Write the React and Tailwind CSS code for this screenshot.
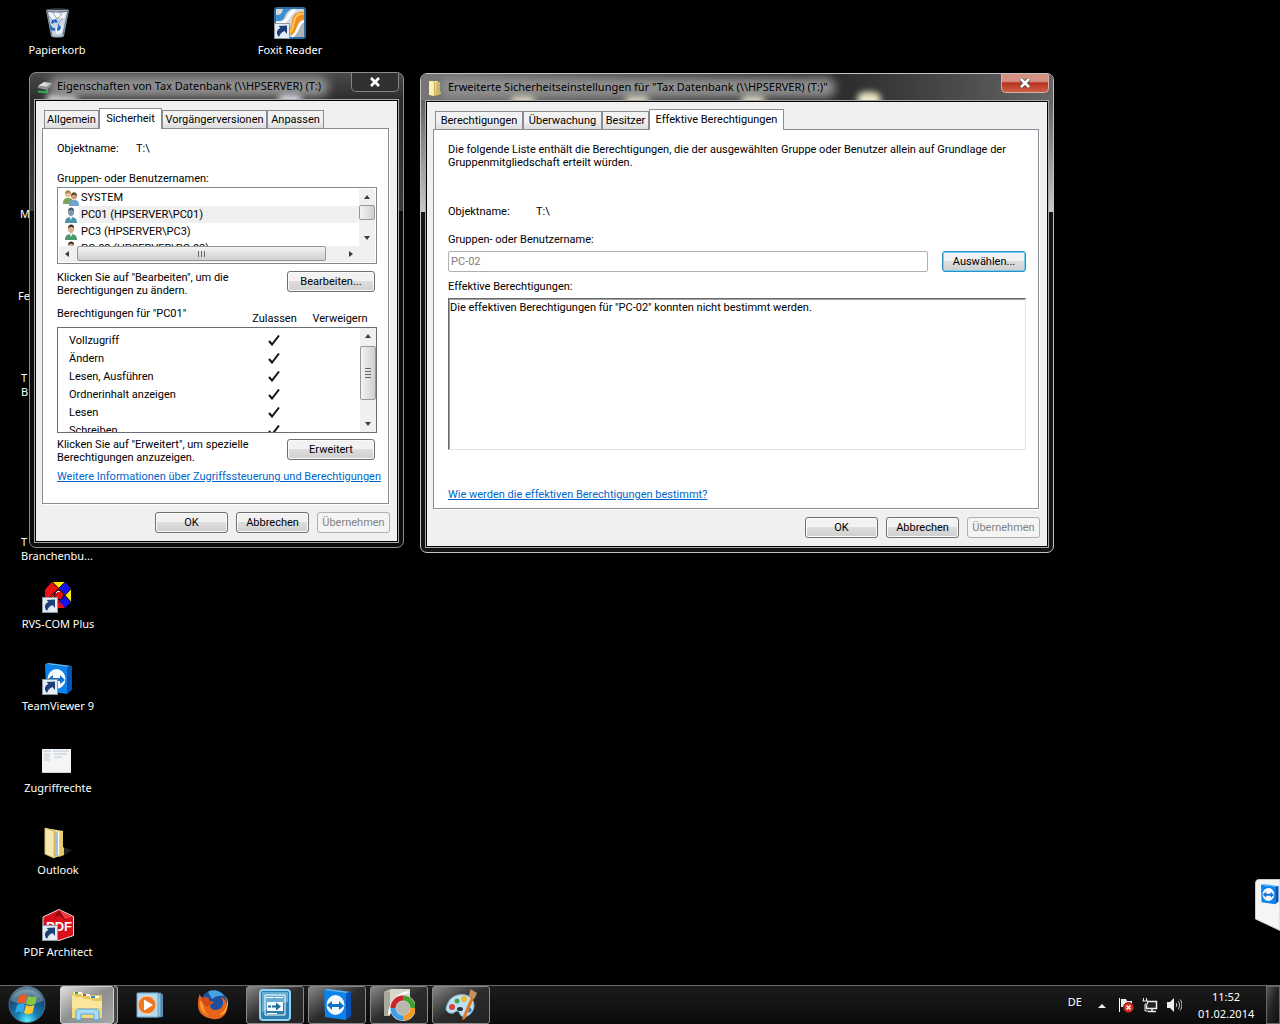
import { useState } from 'react';
import clsx from 'clsx';

/* ---------- Icons ---------- */

const ShortcutBadge = () => (
  <g>
    <rect x="0.5" y="16.5" width="15" height="15" fill="#e4ebf1" stroke="#8d98a3" />
    <path d="M5 30c-3-3-3-7 1.500-9L4.500 19 13 18.500V27l-2.500-3C7.500 25 6 27 5 30z" fill="#1c3f78" />
  </g>
);

const RecycleBinIcon = () => (
  <svg viewBox="0 0 32 32" className="w-8 h-8" aria-hidden="true">
    <path d="M5 3l5 26c1 2 12 2 13 0l5-26z" fill="#9fafc1" />
    <path d="M7 5l4 23c2 1 9 1 10 0l5-23z" fill="#cbd6e2" />
    <path d="M8 4l4 3 3-3 4 4 6-4-2 8-6-2-4 4-4-3z" fill="#f4f8fc" />
    <path d="M12 6l4 6 5-5M8 9l4 5M22 11l-5 6 3 8" stroke="#93a3b6" fill="none" />
    <path d="M15 20l5 2 2-5-1 9-6 1z" fill="#eef3f9" />
    <ellipse cx="16.500" cy="3.500" rx="11.500" ry="1.500" fill="none" stroke="#5c6773" />
    <path d="M6 4l5 24M27 4l-5 24" stroke="#66758a" fill="none" />
    <path d="M11 13l4-1 2 3-2 1-2-1-1 2-2-1zM17 17l3 3-1 3-3 1v-3l1-1zM9 17l3 4 2 0v3l-4-1z" fill="#2468c9" />
  </svg>
);

const FoxitIcon = () => (
  <svg viewBox="0 0 32 32" className="w-8 h-8" aria-hidden="true">
    <rect x="1" y="1" width="30" height="30" rx="2" fill="#d3d8de" stroke="#2a6a9c" strokeWidth="2" />
    <path d="M2 14c8 1 8-3 10-7 2-3 4-4 5-5H9C8 6 7 8 2 8z" fill="#3c8fd0" />
    <path d="M2 16c9 1 11-3 13-7 2-4 4-5 6-6" stroke="#fff" strokeWidth="3" fill="none" />
    <path d="M30 5c-7-1-11 3-12 9-1 7-2 8-5 11l5 3c4-4 4-7 6-11 1-3 3-4 6-4z" fill="#f28c17" />
    <path d="M30 7c-6-1-9 3-10 8-1 6-2 8-4 11" stroke="#ffc75a" strokeWidth="2" fill="none" />
    <path d="M19 30c5-4 6-14 11-15v15z" fill="#aeb3ba" />
    <path d="M18 30c7-5 6-14 12-16" stroke="#fff" strokeWidth="2" fill="none" />
    <ShortcutBadge />
  </svg>
);

const RvsIcon = () => (
  <svg viewBox="0 0 32 32" className="w-8 h-8" aria-hidden="true">
    <path d="M10 1h13l6 7v13l-7 6H10l-7-8V9z" fill="#e11" />
    <path d="M11 1h12l-6 6z" fill="#fe0" />
    <path d="M23 1l6 7-6 6-6-7z" fill="#11e" />
    <path d="M10 1l7 6-8 8-6-6z" fill="#e11" />
    <path d="M29 8v13l-6-7z" fill="#fe0" />
    <path d="M23 14l6 7-6 6-6-7z" fill="#11e" />
    <path d="M17 20l5 7H11z" fill="#e11" />
    <path d="M10 1l19 20M23 1L4 20M29 8L12 26" stroke="#111" fill="none" />
    <circle cx="17" cy="14" r="4.500" fill="#d11" stroke="#111" />
    <path d="M14 12c1-2 3-2 4-1" stroke="#fff" fill="none" />
    <ShortcutBadge />
  </svg>
);

const TeamViewerShape = () => (
  <g>
    <path d="M3 1l22 3v27L4 28z" fill="#0b83ea" />
    <path d="M3 1l4-1 23 3-5 1z" fill="#58baff" />
    <path d="M25 4l5-1v24l-5 4z" fill="#0552b4" />
    <ellipse cx="14.500" cy="16" rx="9" ry="10" fill="#f4f9fd" />
    <path d="M6 16l5-4v3h7v-3l5 5-5 4v-3h-7v3z" fill="#1170c8" />
  </g>
);

const TeamViewerIcon = ({ shortcut }) => (
  <svg viewBox="0 0 32 32" className="w-8 h-8" aria-hidden="true">
    <TeamViewerShape />
    {shortcut && <ShortcutBadge />}
  </svg>
);

const ThumbnailIcon = () => (
  <svg viewBox="0 0 32 32" className="w-8 h-8" aria-hidden="true">
    <rect x="0" y="4" width="29" height="24" fill="#f3f5f6" />
    <path d="M1 6h8M11 6h16M12 9h13M12 12h8" stroke="#b9c6d2" />
    <path d="M2 9h6M2 11h6M2 13h5M2 15h6" stroke="#c8ccd0" />
    <path d="M0 27.500h29" stroke="#cfd3d6" />
  </svg>
);

const FolderIcon = () => (
  <svg viewBox="0 0 32 32" className="w-8 h-8" aria-hidden="true">
    <path d="M21 20l9 3-9 6z" fill="#222" />
    <path d="M3 1l18 3v24l-9 3z" fill="#efdc92" />
    <path d="M12 4l3 1v24l-3 1z" fill="#d9b95a" />
    <path d="M14 6l3 0v22l-3 1z" fill="#9cbfe0" />
    <path d="M16.500 6v22" stroke="#fff" />
    <path d="M18 5l3 1v14l1 1v7l-5 2z" fill="#e5c868" />
    <path d="M3 1l9 3v27l-9-4z" fill="#f6e8ae" stroke="#d5bc66" />
  </svg>
);

const PdfIcon = () => (
  <svg viewBox="0 0 32 32" className="w-8 h-8" aria-hidden="true">
    <path d="M17 0.500l14.500 7v19l-14.500 5L1 26V8z" fill="#d9101a" stroke="#f4dede" />
    <path d="M17 1l-6 9 6-4 8 6-3-8z" fill="#8e0610" />
    <path d="M17 1l13 7-7 2z" fill="#f23a3f" />
    <text x="17" y="22" textAnchor="middle" fill="#fff" className="font-['Liberation_Sans'] font-bold text-[13px]">PDF</text>
    <ShortcutBadge />
  </svg>
);

const StartOrb = () => (
  <svg viewBox="0 0 38 38" className="w-[38px] h-[38px]" aria-hidden="true">
    <defs>
      <radialGradient id="orb" cx="50%" cy="95%" r="85%">
        <stop offset="0" stopColor="#5ff0ff" />
        <stop offset="0.350" stopColor="#1581b8" />
        <stop offset="0.800" stopColor="#174a72" />
        <stop offset="1" stopColor="#5d7f95" />
      </radialGradient>
    </defs>
    <circle cx="19" cy="18.500" r="18" fill="url(#orb)" stroke="#4c6c80" />
    <path d="M3 15c4-15 28-15 32 0-10 4-22 4-32 0z" fill="#fff" opacity="0.250" />
    <path d="M11 10c3-2 5-2 8-0.500l-2 8c-3-1.500-5-1-8 0.500z" fill="#ee5a24" />
    <path d="M20 10c3 1.500 5 1.500 9 0l-2 8c-3 1.500-6 1.500-9 0z" fill="#8cc63e" />
    <path d="M9 19c3-1.500 5-2 8-0.500l-2 8c-3-1.500-5-1-8 0.500z" fill="#35a8e8" />
    <path d="M18 19c3 1.500 5 1.500 8.500 0l-2 8c-3 1.500-5.500 1.500-8.500 0z" fill="#fdc82f" />
  </svg>
);

const ExplorerIcon = () => (
  <svg viewBox="0 0 32 32" className="w-8 h-8" aria-hidden="true">
    <path d="M1 3h10l2 3h18v23H1z" fill="#e8c75c" />
    <path d="M3 3h8v2H3z" fill="#fff" /><path d="M4 3h3v2H4z" fill="#3a3" />
    <path d="M11 5h8v2h-8z" fill="#fff" /><path d="M12 5h3v2h-3z" fill="#d43" />
    <path d="M19 7h9v2h-9z" fill="#fff" /><path d="M20 7h4v2h-4z" fill="#38c" />
    <path d="M1 6h2l1 2h7l2 2h7l2 2h9v17H1z" fill="#f9e69a" />
    <path d="M1 19h30v10H1z" fill="#f2d87e" />
    <path d="M5 31v-8c0-2 1-3 3-3h17c2 0 3 1 3 3v8h-5v-6H10v6z" fill="#a6dcf5" stroke="#5aa3d0" />
  </svg>
);

const MediaPlayerIcon = () => (
  <svg viewBox="0 0 32 32" className="w-8 h-8" aria-hidden="true">
    <path d="M9 5h20v23H9z" fill="#5b91b8" />
    <path d="M6 4h21v24H6z" fill="#8fc0de" stroke="#48799d" />
    <path d="M3 4h21v24H3z" fill="#b7dbee" stroke="#6fa3c4" />
    <circle cx="13" cy="16" r="9" fill="#ef7623" stroke="#fbd2ae" />
    <path d="M10 10.500v11l9-5.500z" fill="#fff" />
  </svg>
);

const FirefoxIcon = () => (
  <svg viewBox="0 0 32 32" className="w-8 h-8" aria-hidden="true">
    <circle cx="17" cy="14" r="13" fill="#1d4f9e" />
    <path d="M11 3c5-3 13-1 16 4-5-1-9 0-12 3z" fill="#49a3e0" />
    <path d="M3 5c0 2 1 3 3 4 2-1 4-1 6 0-1 1-1 2 1 3l4 1c-1 2-4 2-4 4 1 5 8 5 12 1 2-3 1-7-1-10 6 3 7 9 6 13-2 7-8 10-14 9C7 29 1 24 1 16c0-4 0-8 2-11z" fill="#e8641b" />
    <path d="M28 7c4 7 2 15-6 19 4 0 7-3 8-7 2-4 1-9-2-12z" fill="#fbc02d" />
    <path d="M3 12c-1 7 3 13 9 15-5-4-6-9-5-14z" fill="#f99a2c" />
    <path d="M4 8c2 2 6 0 8 2-1 2 1 3 4 3-2 3-5 2-5 5-4-1-7-4-7-10z" fill="#d5471a" />
  </svg>
);

const RemoteIcon = () => (
  <svg viewBox="0 0 32 32" className="w-8 h-8" aria-hidden="true">
    <rect x="1" y="1" width="30" height="30" rx="3" fill="#2f7fae" stroke="#8fd3f2" strokeWidth="2" />
    <path d="M3 3h26v10C20 14 10 18 3 24z" fill="#8ccbe8" opacity="0.600" />
    <path d="M6 6h20v20H6z" fill="none" stroke="#fff" />
    <path d="M7 8.500h18" stroke="#fff" strokeDasharray="8 1" />
    <path d="M8 13h16v9H8z" fill="#f4fafd" />
    <path d="M9 17.500h3M13 17.500h5" stroke="#1f6a96" strokeWidth="2" />
    <path d="M17 13.500l5 4-5 4z" fill="#1f6a96" />
    <path d="M8 24.500h10" stroke="#fff" />
  </svg>
);

const BackupIcon = () => (
  <svg viewBox="0 0 32 32" className="w-8 h-8" aria-hidden="true">
    <path d="M1 3l7-3h19v17L1 27z" fill="#d8d5cb" />
    <path d="M1 3l6-1v25H1z" fill="#aaa79c" />
    <path d="M6 26C7 12 14 5 26 3" stroke="#fff" strokeWidth="2" fill="none" />
    <circle cx="20" cy="19" r="10" fill="#b9b6ad" stroke="#ddd" strokeWidth="6" />
    <path d="M10 19a10 10 0 0 1 10-10" stroke="#c8242a" strokeWidth="5" fill="none" />
    <path d="M20 9a10 10 0 0 1 10 10" stroke="#43a02a" strokeWidth="5" fill="none" />
    <path d="M30 19a10 10 0 0 1-10 10" stroke="#f59a1c" strokeWidth="5" fill="none" />
    <path d="M20 29a10 10 0 0 1-10-10" stroke="#3b9fe8" strokeWidth="5" fill="none" />
  </svg>
);

const PaintIcon = () => (
  <svg viewBox="0 0 32 32" className="w-8 h-8" aria-hidden="true">
    <path d="M3 14C6 6 18 3 25 8c6 5 5 14-1 18-4 3-8 2-9-1s-3-4-5-2-8 2-9-3c0-2 1-4 2-6z" fill="#bfdff2" stroke="#7fb0d0" />
    <ellipse cx="15" cy="20" rx="3" ry="2" fill="#26313a" />
    <circle cx="7" cy="18" r="3" fill="#d8433d" />
    <circle cx="12" cy="12" r="2.500" fill="#4aa53c" />
    <circle cx="19" cy="10" r="3" fill="#f0b72d" />
    <circle cx="24" cy="21" r="2.500" fill="#3c78c8" />
    <path d="M26 8l3 1-9 21-3 1 1-4z" fill="#e07b20" />
    <path d="M24 7c0-3 2-5 1-7l7 4c-1 2-2 5-3 6z" fill="#c29459" />
  </svg>
);

const UserIcon = ({ selected }) => (
  <svg viewBox="0 0 16 16" className="w-4 h-4" aria-hidden="true">
    <path d="M2 16c0-4 2-6 6-6s6 2 6 6z" fill={selected ? '#4a93a8' : '#4c9a6a'} />
    <path d="M6 9h4l-2 4z" fill="#e8f0f4" />
    <ellipse cx="8" cy="5" rx="3" ry="4" fill={selected ? '#7d97a8' : '#dcae86'} />
    <path d="M5 4c0-4 6-5 6 0l-3-1.500z" fill={selected ? '#3f5a72' : '#3d2a1f'} />
  </svg>
);

const GroupIcon = () => (
  <svg viewBox="0 0 16 16" className="w-4 h-4" aria-hidden="true">
    <path d="M0 14c0-4 1-6 5-6s5 2 5 6z" fill="#7fa35a" />
    <circle cx="5" cy="4.500" r="3" fill="#e6c79a" />
    <path d="M2 4c0-5 6-5 6 0L5 2.500z" fill="#a78237" />
    <path d="M6 16c0-4 1-6 5-6s5 2 5 6z" fill="#6ea3cf" />
    <circle cx="11" cy="6.500" r="3" fill="#cf9c77" />
    <path d="M8 6c0-5 6-5 6 0l-3-1.500z" fill="#5d4030" />
  </svg>
);

const DriveIcon = () => (
  <svg viewBox="0 0 16 16" className="w-4 h-4" aria-hidden="true">
    <path d="M1 7l6-4 8 1-5 4z" fill="#e3e6e8" />
    <path d="M1 7l9 1 5-4v2l-5 5-9-2z" fill="#8c9499" />
    <path d="M1 12.500l9 1V11" stroke="#2bb04a" strokeWidth="2" fill="none" />
  </svg>
);

const SmallFolderIcon = () => (
  <svg viewBox="0 0 16 16" className="w-4 h-4" aria-hidden="true">
    <path d="M1 1h9l1 14-10 0z" fill="#f5e28c" />
    <path d="M1 1l5 1v14l-5-1z" fill="#fdf3b8" />
    <path d="M6.500 2v14" stroke="#d3b24c" />
    <path d="M9 2h3v9l1 1v2l-6 2z" fill="#e2c463" />
  </svg>
);

const CheckMark = () => (
  <svg viewBox="0 0 12 12" className="w-3 h-3 mx-auto" role="img" aria-label="Zugelassen">
    <path d="M1 7l3 3.500 7-9" stroke="#111" strokeWidth="2" fill="none" />
  </svg>
);

/* ---------- Shared controls ---------- */

const Button = ({ children, className, disabled, focused, ...props }) => (
  <button
    disabled={disabled}
    className={clsx(
      'h-[21px] shrink-0 rounded-[3px] border text-center',
      disabled
        ? 'border-[#adb2b5] bg-[#f4f4f4] text-[#838383]'
        : 'bg-linear-to-b from-[#f2f2f2] from-45% via-[#dddddd] via-50% to-[#cfcfcf]',
      !disabled && (focused ? 'border-[#2b8fc4] shadow-[inset_0_0_0_1px_#6fd0f4]' : 'border-[#707070] shadow-[inset_0_0_0_1px_#fafafa]'),
      className
    )}
    {...props}
  >
    {children}
  </button>
);

const arrows = {
  up: 'M1 6l3-4 3 4z',
  down: 'M1 2l3 4 3-4z',
  left: 'M6 1L2 4l4 3z',
  right: 'M2 1l4 3-4 3z',
};

const ScrollArrow = ({ dir, label }) => (
  <button aria-label={label} className="flex w-4 h-4 shrink-0 items-center justify-center">
    <svg viewBox="0 0 8 8" className="w-2 h-2" aria-hidden="true">
      <path d={arrows[dir]} fill="#3c3c3c" />
    </svg>
  </button>
);

const VerticalScrollbar = ({ thumb, grip }) => (
  <div className="flex w-4 shrink-0 flex-col bg-[#f0f0f0]">
    <ScrollArrow dir="up" label="Nach oben" />
    <div className="flex-1">
      <div className={clsx('flex flex-col items-center justify-center gap-px rounded-[2px] border border-[#979797] bg-linear-to-r from-[#f4f4f4] to-[#cfcfcf]', thumb)}>
        {grip && [0, 1, 2, 3].map(i => <span key={i} className="h-px w-1.5 bg-[#666] mb-px"></span>)}
      </div>
    </div>
    <ScrollArrow dir="down" label="Nach unten" />
  </div>
);

const Window = ({ title, icon, active, tabs, initialTab, frame, className, glow, children }) => {
  const [tab, setTab] = useState(initialTab);

  return (
    <section aria-label={title} className={clsx('absolute rounded-[7px] border px-1 pb-1 overflow-hidden', frame, className)}>
      {glow}
      <header className="relative flex h-[26px] items-start justify-between pl-[3px]">
        <div className="flex">
          <span className="mt-1.5">{icon}</span>
          <div className="relative ml-1 mt-[5px]">
            <div className="absolute -inset-x-2 -top-0.5 -bottom-0.5 rounded-full bg-[#8f8f8f] blur-[5px]"></div>
            <h2 className="relative whitespace-nowrap font-['Noto_Sans',sans-serif] text-[11px] leading-4 text-black">{title}</h2>
          </div>
        </div>
        <button
          aria-label="Schließen"
          className={clsx(
            'flex w-12 h-[19px] items-center justify-center rounded-b-[5px] border border-t-0',
            active
              ? 'border-[#d8b0a8] bg-linear-to-b from-[#d59184] from-40% via-[#b5301c] via-50% to-[#cf5f43]'
              : 'border-[#858585] bg-[#303030]'
          )}
        >
          <svg viewBox="0 0 12 10" className="w-3 h-2.5" aria-hidden="true">
            <path d="M2 1l8 8M10 1L2 9" stroke="#444" strokeWidth="4" />
            <path d="M2 1l8 8M10 1L2 9" stroke="#fff" strokeWidth="2.500" />
          </svg>
        </button>
      </header>

      <div className="relative border border-[#a8a8a8]">
        <div className="border border-black bg-[#f0f0f0] pt-[7px] pb-2 pl-1.5 pr-2 text-[11px] leading-[13px] text-black">
          <div role="tablist" className="relative flex items-end pl-0.5">
            {tabs.map(t => (
              <button
                key={t.name}
                role="tab"
                aria-selected={tab === t.name}
                onClick={() => setTab(t.name)}
                className={clsx(
                  'border border-b-0 border-[#898c95] whitespace-nowrap text-center',
                  t.width,
                  tab === t.name
                    ? '-mb-px h-[21px] bg-white pb-0.5'
                    : 'h-[18px] bg-linear-to-b from-[#f2f2f2] from-50% to-[#dcdcdc]'
                )}
              >
                {t.name}
              </button>
            ))}
          </div>
          <div role="tabpanel" className="border border-[#898c95] bg-white shadow-[1px_1px_0_#fff] pl-3.5">
            {children}
          </div>
          <div className="mt-2 -mr-px flex justify-end gap-2">
            <Button className="w-[73px]">OK</Button>
            <Button className="w-[73px]">Abbrechen</Button>
            <Button className="w-[73px]" disabled>Übernehmen</Button>
          </div>
        </div>
      </div>
    </section>
  );
};

/* ---------- Dialogs ---------- */

const users = [
  { name: 'SYSTEM', group: true },
  { name: 'PC01 (HPSERVER\\PC01)' },
  { name: 'PC3 (HPSERVER\\PC3)' },
  { name: 'PC-02 (HPSERVER\\PC-02)' },
];

const permissions = ['Vollzugriff', 'Ändern', 'Lesen, Ausführen', 'Ordnerinhalt anzeigen', 'Lesen', 'Schreiben'];

const PropertiesWindow = () => {
  const [selected, setSelected] = useState(1);

  return (
    <Window
      title="Eigenschaften von Tax Datenbank (\\HPSERVER) (T:)"
      icon={<DriveIcon />}
      className="left-[29px] top-[72px] w-[375px]"
      frame="border-[#8c8c8c] bg-[linear-gradient(to_bottom,#4a4a4a_0,#2c2c2c_28px,#3a3a3a_138px,#0c0c0c_138px)]"
      initialTab="Sicherheit"
      tabs={[
        { name: 'Allgemein', width: 'w-[55px]' },
        { name: 'Sicherheit', width: 'w-[63px]' },
        { name: 'Vorgängerversionen', width: 'w-[105px]' },
        { name: 'Anpassen', width: 'w-[57px]' },
      ]}
      glow={
        <>
          <div className="absolute left-4 top-5 h-4 w-8 rounded-full bg-[#ddd] blur-[3px]"></div>
          <div className="absolute left-[248px] top-[18px] h-4 w-6 rounded-full bg-[#eef] blur-[3px]"></div>
        </>
      }
    >
      <div className="pt-[13px] pr-[11px] pb-5">
        <p className="flex">
          <span className="w-[79px]">Objektname:</span>
          <span>T:\</span>
        </p>

        <p id="users-label" className="mt-[17px]">Gruppen- oder Benutzernamen:</p>
        <div className="mt-0.5 h-[77px] border border-[#828790] bg-white p-px flex flex-col">
          <div className="flex h-[57px]">
            <ul role="listbox" aria-labelledby="users-label" className="flex-1 overflow-hidden pl-1">
              {users.map((u, i) => (
                <li
                  key={u.name}
                  role="option"
                  aria-selected={selected === i}
                  onClick={() => setSelected(i)}
                  className="flex h-[17px] items-center"
                >
                  {u.group ? <GroupIcon /> : <UserIcon selected={selected === i} />}
                  <span className={clsx('h-full flex-1 pl-0.5 leading-[17px]', selected === i && 'bg-[#f0f0f0]')}>{u.name}</span>
                </li>
              ))}
            </ul>
            <VerticalScrollbar thumb="h-[15px]" />
          </div>
          <div className="flex flex-1 bg-[#f0f0f0] pr-4">
            <ScrollArrow dir="left" label="Nach links" />
            <div className="flex-1 pl-0.5">
              <div className="flex h-[15px] w-[249px] items-center justify-center gap-0.5 rounded-[2px] border border-[#979797] bg-linear-to-b from-[#f4f4f4] to-[#cfcfcf]">
                {[0, 1, 2].map(i => <span key={i} className="h-1.5 w-px bg-[#666]"></span>)}
              </div>
            </div>
            <ScrollArrow dir="right" label="Nach rechts" />
          </div>
        </div>

        <div className="mt-[7px] mr-0.5 flex justify-between">
          <p>
            Klicken Sie auf "Bearbeiten", um die
            <br />
            Berechtigungen zu ändern.
          </p>
          <Button className="w-[88px]">Bearbeiten...</Button>
        </div>

        <div className="relative mt-[10px]">
          <table className="block">
            <thead className="block">
              <tr className="flex h-5">
                <th className="w-[185px] text-left font-normal">Berechtigungen für "PC01"</th>
                <th className="w-[65px] pt-[5px] font-normal">Zulassen</th>
                <th className="w-[66px] pt-[5px] font-normal">Verweigern</th>
              </tr>
            </thead>
            <tbody className="block h-[106px] overflow-hidden border border-[#6a6e75] pt-[3px]">
              {permissions.map(p => (
                <tr key={p} className="flex h-[18px] items-center">
                  <td className="w-[184px] pl-[11px]">{p}</td>
                  <td className="w-16"><CheckMark /></td>
                  <td className="w-[50px]"></td>
                </tr>
              ))}
            </tbody>
          </table>
          <div className="absolute right-px bottom-px flex h-[104px]">
            <VerticalScrollbar thumb="h-[54px] mt-0.5" grip />
          </div>
        </div>

        <div className="mt-[5px] mr-0.5 flex items-start justify-between">
          <p>
            Klicken Sie auf "Erweitert", um spezielle
            <br />
            Berechtigungen anzuzeigen.
          </p>
          <Button className="w-[88px] mt-px">Erweitert</Button>
        </div>
        <a href="#zugriffssteuerung" className="mt-1.5 block whitespace-nowrap text-[#0066cc] underline">
          Weitere Informationen über Zugriffssteuerung und Berechtigungen
        </a>
      </div>
    </Window>
  );
};

const SecurityWindow = () => (
  <Window
    active
    title={'Erweiterte Sicherheitseinstellungen für "Tax Datenbank (\\\\HPSERVER) (T:)"'}
    icon={<SmallFolderIcon />}
    className="left-[420px] top-[73px] w-[634px]"
    frame="border-[#c4c4c4] bg-[linear-gradient(to_bottom,#3c3c3c_0,#666_30px,#c8c8c8_138px,#141414_138px)]"
    initialTab="Effektive Berechtigungen"
    tabs={[
      { name: 'Berechtigungen', width: 'w-[88px]' },
      { name: 'Überwachung', width: 'w-[79px]' },
      { name: 'Besitzer', width: 'w-[47px]' },
      { name: 'Effektive Berechtigungen', width: 'w-[135px]' },
    ]}
    glow={
      <>
        <div className="absolute inset-x-0 top-0 h-[26px] bg-linear-to-r from-[#777] via-[#222] via-60% to-[#666]"></div>
        <div className="absolute left-[90px] top-[18px] h-4 w-6 rounded-full bg-[#efe8c8] blur-[3px]"></div>
        <div className="absolute left-[204px] top-[18px] h-4 w-6 rounded-full bg-[#efe8c8] blur-[3px]"></div>
        <div className="absolute left-[320px] top-[18px] h-4 w-6 rounded-full bg-[#efe8c8] blur-[3px]"></div>
        <div className="absolute left-[436px] top-[18px] h-4 w-6 rounded-full bg-[#efe8c8] blur-[3px]"></div>
      </>
    }
  >
    <div className="pt-[13px] pr-3 pb-[7px]">
      <p>
        Die folgende Liste enthält die Berechtigungen, die der ausgewählten Gruppe oder Benutzer allein auf Grundlage der
        <br />
        Gruppenmitgliedschaft erteilt würden.
      </p>
      <p className="mt-9 flex">
        <span className="w-[88px]">Objektname:</span>
        <span>T:\</span>
      </p>
      <label htmlFor="principal" className="mt-[15px] block">Gruppen- oder Benutzername:</label>
      <div className="mt-[5px] flex gap-3.5">
        <input
          id="principal"
          disabled
          defaultValue="PC-02"
          className="h-[21px] min-w-0 flex-1 rounded-[2px] border border-[#afafaf] bg-white px-0.5 text-[#808080]"
        />
        <Button className="w-[84px]" focused>Auswählen...</Button>
      </div>
      <label htmlFor="effective" className="mt-2 block">Effektive Berechtigungen:</label>
      <textarea
        id="effective"
        readOnly
        defaultValue={'Die effektiven Berechtigungen für "PC-02" konnten nicht bestimmt werden.'}
        className="mt-[5px] block h-[152px] w-full resize-none border border-t-[#696969] border-l-[#696969] border-r-[#e3e3e3] border-b-[#e3e3e3] bg-white pl-px pt-0.5 shadow-[inset_1px_1px_0_#a0a0a0] outline-none"
      />
      <a href="#effektive-berechtigungen" className="mt-[38px] inline-block text-[#0066cc] underline">
        Wie werden die effektiven Berechtigungen bestimmt?
      </a>
    </div>
  </Window>
);

/* ---------- Desktop ---------- */

const shortcuts = [
  { label: 'Papierkorb', icon: <RecycleBinIcon />, pos: 'left-[7px] top-[7px]' },
  { label: 'Foxit Reader', icon: <FoxitIcon />, pos: 'left-[240px] top-[7px]' },
  { label: 'RVS-COM Plus', icon: <RvsIcon />, pos: 'left-2 top-[581px]' },
  { label: 'TeamViewer 9', icon: <TeamViewerIcon shortcut />, pos: 'left-2 top-[663px]' },
  { label: 'Zugriffrechte', icon: <ThumbnailIcon />, pos: 'left-2 top-[745px]' },
  { label: 'Outlook', icon: <FolderIcon />, pos: 'left-2 top-[827px]' },
  { label: 'PDF Architect', icon: <PdfIcon />, pos: 'left-2 top-[909px]' },
];

// labels of the icons that are mostly covered by the properties window
const coveredLabels = [
  { lines: ['M'], pos: 'left-5 top-[207px]' },
  { lines: ['Fe'], pos: 'left-[18px] top-[289px]' },
  { lines: ['T', 'B'], pos: 'left-[21px] top-[371px]' },
  { lines: ['T', 'Branchenbu...'], pos: 'left-[21px] top-[535px]' },
];

const Desktop = () => (
  <main className="relative flex-1 overflow-hidden">
    {shortcuts.map(s => (
      <button key={s.label} className={clsx('absolute flex w-[100px] flex-col items-center gap-[3px]', s.pos)}>
        {s.icon}
        <span className="whitespace-nowrap text-[11px] leading-[15px]">{s.label}</span>
      </button>
    ))}
    {coveredLabels.map(c => (
      <p key={c.pos} className={clsx('absolute text-[11px] leading-[14px]', c.pos)}>
        {c.lines.map(l => <span key={l} className="block">{l}</span>)}
      </p>
    ))}

    <PropertiesWindow />
    <SecurityWindow />

    <button aria-label="TeamViewer" className="absolute right-0 bottom-[54px]">
      <svg viewBox="0 0 25 52" className="w-[25px] h-[52px]" aria-hidden="true">
        <path d="M25 0.500H4a3.500 3.500 0 0 0-3.500 3.500v36L25 51.500z" fill="#f5f5f5" stroke="#ccc" />
        <g transform="translate(4 5) scale(0.650)">
          <TeamViewerShape />
        </g>
      </svg>
    </button>
  </main>
);

/* ---------- Taskbar ---------- */

const running = [
  { name: 'Remoteverbindung', icon: <RemoteIcon /> },
  { name: 'TeamViewer', icon: <TeamViewerIcon /> },
  { name: 'Datensicherung', icon: <BackupIcon /> },
  { name: 'Paint', icon: <PaintIcon /> },
];

const Taskbar = () => (
  <footer className="flex h-[39px] shrink-0 border-t border-[#6b6b6b] bg-linear-to-b from-[#1b1b1b] to-[#0b0b0b]">
    <button aria-label="Start" className="ml-2"><StartOrb /></button>
    <button aria-label="Windows-Explorer" className="ml-3.5 flex w-[54px] items-center justify-center rounded-[3px] border border-[#d0d0d0] bg-linear-to-br from-[#e0e0e0] via-[#8d8d8d] to-[#a8a8a8]">
      <ExplorerIcon />
    </button>
    <span className="w-1 rounded-r-[3px] border border-l-0 border-[#a0a0a0] bg-[#444]"></span>
    <button aria-label="Media Player" className="ml-4 flex w-8 items-center justify-center"><MediaPlayerIcon /></button>
    <button aria-label="Firefox" className="ml-[31px] flex w-8 items-center justify-center"><FirefoxIcon /></button>
    <div className="ml-[17px] flex gap-1">
      {running.map(r => (
        <button
          key={r.name}
          aria-label={r.name}
          className="flex w-[58px] items-center justify-center rounded-[3px] border border-[#888] bg-linear-to-br from-[#888] via-[#2c2c2c] to-[#222]"
        >
          {r.icon}
        </button>
      ))}
    </div>

    <div className="ml-auto flex items-center text-[11px]">
      <button aria-label="Eingabesprache" className="pb-1.5">DE</button>
      <button aria-label="Ausgeblendete Symbole" className="ml-4">
        <svg viewBox="0 0 8 5" className="h-[5px] w-2" aria-hidden="true"><path d="M0 5l4-4 4 4z" fill="#eee" /></svg>
      </button>
      <button aria-label="Wartungscenter" className="ml-3">
        <svg viewBox="0 0 16 16" className="w-4 h-4" aria-hidden="true">
          <path d="M1.500 1v14" stroke="#fff" />
          <path d="M3 2h5l1 2h5v6H3z" fill="#eee" />
          <circle cx="10.500" cy="10.500" r="5" fill="#d93025" stroke="#7d1410" />
          <path d="M8.500 8.500l4 4M12.500 8.500l-4 4" stroke="#fff" strokeWidth="1.500" />
        </svg>
      </button>
      <button aria-label="Netzwerk" className="ml-2">
        <svg viewBox="0 0 16 16" className="w-4 h-4" aria-hidden="true">
          <path d="M5 4.500h9.500v7H4.500V8" stroke="#eee" strokeWidth="1.500" fill="#222" />
          <path d="M6 14.500h8M10 12v2" stroke="#eee" strokeWidth="1.500" />
          <path d="M1.500 1v3M4.500 1v3M0.500 4h5v3H3v7h3" stroke="#eee" fill="none" />
        </svg>
      </button>
      <button aria-label="Lautstärke" className="ml-2">
        <svg viewBox="0 0 16 16" className="w-4 h-4" aria-hidden="true">
          <path d="M1 5h3l4-4v14l-4-4H1z" fill="#eee" />
          <path d="M10 6c1 1 1 3 0 4M12 4c2 2 2 6 0 8M14 2.500c2.500 3 2.500 8 0 11" stroke="#ccc" fill="none" />
        </svg>
      </button>
      <time dateTime="2014-02-01T11:52" className="ml-4 block w-[56px] text-center leading-[17px]">
        11:52
        <br />
        01.02.2014
      </time>
    </div>
    <button aria-label="Desktop anzeigen" className="ml-3 w-3.5 border border-[#666] bg-linear-to-br from-[#555] via-[#222] to-[#111]"></button>
  </footer>
);

export default function App() {
  return (
    <div className="flex min-h-screen flex-col bg-black font-['Noto_Sans',sans-serif] text-white [&_section]:font-['Roboto',sans-serif]">
      <Desktop />
      <Taskbar />
    </div>
  );
}
